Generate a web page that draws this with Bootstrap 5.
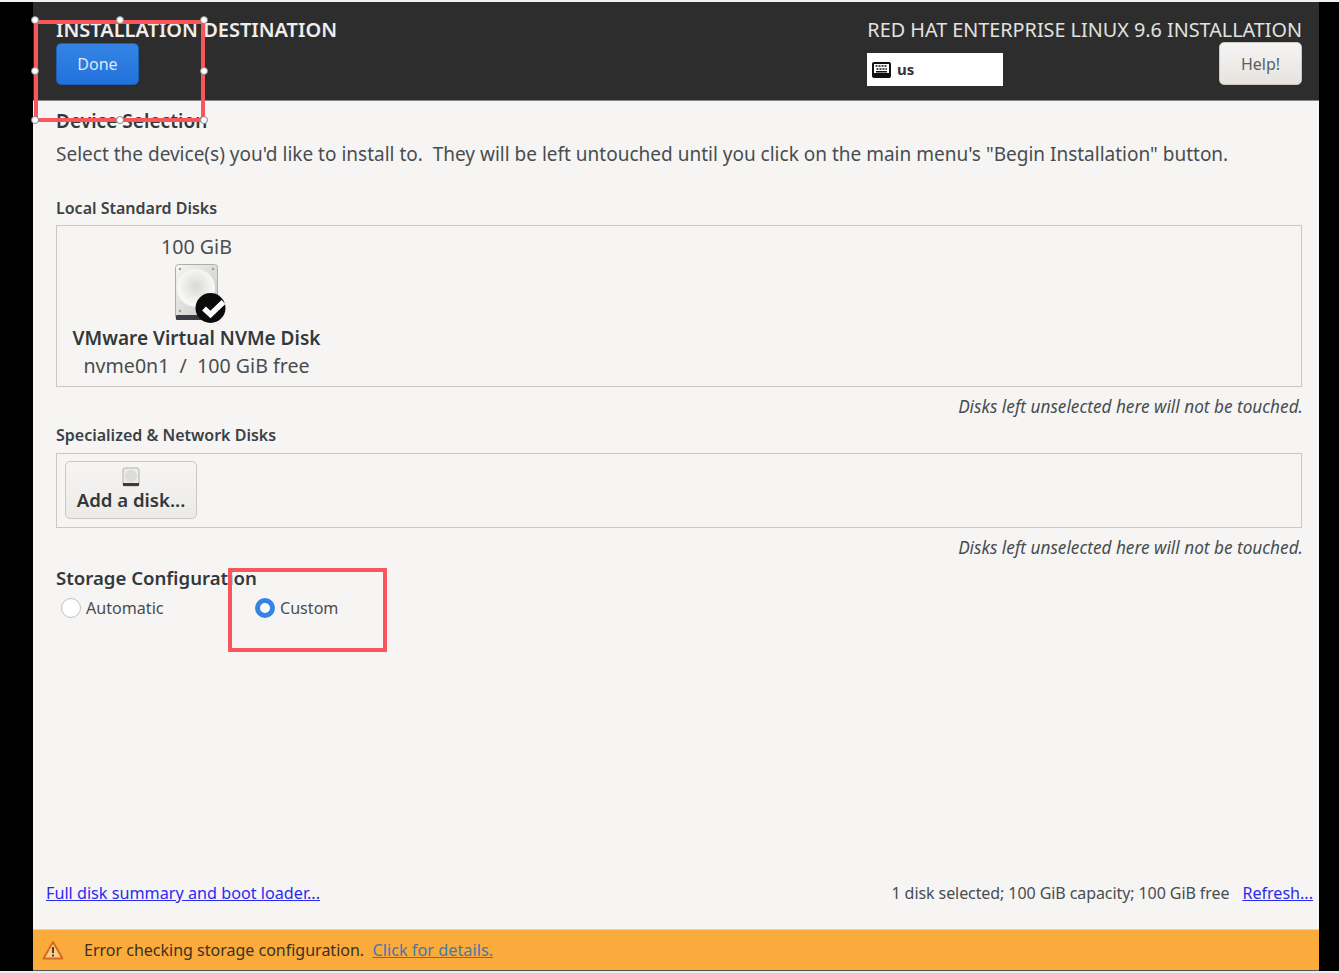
<!DOCTYPE html>
<html lang="en">
<head>
<meta charset="utf-8">
<title>Installation Destination</title>
<link href="https://cdn.jsdelivr.net/npm/bootstrap@5.3.0/dist/css/bootstrap.min.css" rel="stylesheet">
<style>
html,body{height:973px;overflow:hidden}
body{background:#000;font-family:"Noto Sans","Open Sans",sans-serif;color:#2e3436;position:relative}
.top-strip{height:2px;background:#f1f1f1}
.bottom-strip{height:2px;background:#ececec}
.win{width:1286px;height:969px;margin-left:33px;background:#f6f5f4}
.hdr{height:99px;background:#2d2d2d;border-bottom:1px solid #8a8a8a;padding:16px 17px 0 23px;color:#eeeeec;flex:none}
.hdr-title{font-size:20px;line-height:24px;font-weight:600;white-space:nowrap}
.hdr-product{font-size:19.8px;line-height:24px;text-align:right;white-space:nowrap;color:#e2e2e0}
.done-btn{width:83px;height:42px;margin-top:1px;background:linear-gradient(#3584e4,#2272dd);border:1px solid #1b5fb8;border-radius:5px;color:#dfe8f7;font-size:16px;padding:0}
.help-btn{width:83px;height:43px;background:linear-gradient(#f6f5f4,#e6e3df);border:1px solid #cdc7c2;border-radius:5px;color:#5a5f60;font-size:16px;padding:0}
.kbd-box{width:136px;height:33px;margin-top:11px;background:#fff;color:#333;font-weight:700;font-size:15px;padding-left:5px;gap:6px}
.hdr-right{width:435px}
.body-area{padding:8px 17px 0 23px}
.sec-head{font-size:19px;line-height:24px;font-weight:600;color:#33383a;letter-spacing:.05px}
.intro{font-size:19px;line-height:24px;margin-top:9px;color:#484d50}
.sub-head{font-size:16px;line-height:20px;font-weight:600;color:#3c4144}
.sub-head-first{margin-top:32px}
.sub-head-second{margin-top:8px}
.disk-box{border:1px solid #cdc7c2}
.disk-box-a{height:162px;margin-top:7px;padding:9px 0 0 15px}
.disk-box-b{height:75px;margin-top:8px;padding:7px 8px}
.disk-tile{width:249px;text-align:center;font-size:19.6px;line-height:24px;color:#484d50}
.disk-name{font-size:19px;font-weight:600;color:#33383a}
.disk-sub{margin-top:4px}
.disk-pic{height:60px;margin:5px 0 2px}
.note{font-style:italic;font-size:17.2px;line-height:20px;text-align:right;color:#484d50;margin-top:10px;margin-right:-1px}
.add-btn{width:132px;height:58px;background:linear-gradient(#f6f5f4,#edebe8);border:1px solid #cdc7c2;border-radius:5px;font-size:18.6px;font-weight:600;line-height:22px;color:#33383a;padding:5px 0 0;gap:2px}
.radio-dot{width:20px;height:20px;border-radius:50%;background:#fff;border:1px solid #c4bfba;flex:none}
.radio-dot-on{border:5px solid #3584e4}
.radio-row{font-size:16.1px;color:#484d50;line-height:20px;margin-top:8px;padding-left:5px}
.radio-item{width:194px;gap:5px}
.storage-head{font-size:18.6px;line-height:24px;font-weight:600;margin-top:8px;color:#33383a}
.foot-row{font-size:16.2px;color:#484d50;margin:auto -17px 0 -23px;padding:0 6px 0 13px;height:48px}
.foot-row a{color:#2a2af0}
.foot-gap{gap:13px}
.foot-link{font-size:16.1px}
.foot-stat{font-size:16px;letter-spacing:-.08px}
.warn-bar{height:42px;flex:none;background:#fbab3b;border-top:1px solid #e8d0a8;border-bottom:1px solid #555;font-size:16px;color:#3a3224;padding-left:9px}
.warn-bar a{color:#4678a8;font-size:16.3px}
.warn-text{margin-left:20px;padding-top:1px}
.anno{position:absolute;border:4px solid #f9555a;border-radius:1px;pointer-events:none}
.anno-a{left:34px;top:20px;width:171px;height:102px}
.anno-b{left:228px;top:568px;width:159px;height:84px}
.handle{position:absolute;width:8px;height:8px;border-radius:50%;background:#fff;border:1px solid #888}
.hx1{left:31px}.hx2{left:116px}.hx3{left:200px}
.hy1{top:16px}.hy2{top:67px}.hy3{top:116px}
</style>
</head>
<body>
<div class="top-strip"></div>
<div class="win d-flex flex-column">
  <header class="hdr d-flex justify-content-between">
    <div>
      <div class="hdr-title">INSTALLATION DESTINATION</div>
      <button type="button" class="btn done-btn">Done</button>
    </div>
    <div class="hdr-right">
      <div class="hdr-product">RED HAT ENTERPRISE LINUX 9.6 INSTALLATION</div>
      <div class="d-flex justify-content-between align-items-start">
        <div class="kbd-box d-flex align-items-center">
          <svg width="19" height="16" viewBox="0 0 19 16" aria-hidden="true"><rect x="0" y="0" width="19" height="16" rx="2" fill="#111"/><rect x="2" y="2" width="15" height="9" fill="#fff"/><path d="M3.500 4h2M6.500 4h2M9.500 4h2M12.500 4h2M4.500 7h2M7.500 7h2M10.500 7h2M13.500 7h1.500" stroke="#111" stroke-width="1.500"/><rect x="4" y="9" width="11" height="1.500" fill="#111"/></svg>
          <span>us</span>
        </div>
        <button type="button" class="btn help-btn">Help!</button>
      </div>
    </div>
  </header>
  <main class="body-area d-flex flex-column flex-grow-1">
    <div class="sec-head">Device Selection</div>
    <div class="intro">Select the device(s) you'd like to install to.&nbsp; They will be left untouched until you click on the main menu's "Begin Installation" button.</div>
    <div class="sub-head sub-head-first">Local Standard Disks</div>
    <div class="disk-box disk-box-a">
      <div class="disk-tile">
        <div>100 GiB</div>
        <div class="disk-pic">
          <svg width="60" height="60" viewBox="0 0 60 60" aria-hidden="true">
            <defs>
              <linearGradient id="dg" x1="0" y1="0" x2="1" y2="1"><stop offset="0" stop-color="#f6f6f4"/><stop offset="1" stop-color="#c4c4c0"/></linearGradient>
              <radialGradient id="pl" cx=".5" cy=".45" r=".6"><stop offset="0" stop-color="#d8d8d4"/><stop offset=".8" stop-color="#f8f8f6"/></radialGradient>
            </defs>
            <rect x="8.500" y=".5" width="42" height="55" rx="3" fill="url(#dg)" stroke="#b0aeaa"/>
            <circle cx="29" cy="24" r="19" fill="url(#pl)"/>
            <rect x="9" y="51" width="41" height="5" rx="1" fill="#3b3b45"/>
            <circle cx="13" cy="5" r="1.200" fill="#999"/><circle cx="46" cy="5" r="1.200" fill="#999"/><circle cx="13" cy="47" r="1.200" fill="#999"/>
            <circle cx="43.500" cy="44" r="15" fill="#0b0b0b"/>
            <path d="M37 44.500l6.500 6 13-12.500" fill="none" stroke="#fff" stroke-width="5.500"/>
          </svg>
        </div>
        <div class="disk-name">VMware Virtual NVMe Disk</div>
        <div class="disk-sub">nvme0n1&nbsp; /&nbsp; 100 GiB free</div>
      </div>
    </div>
    <div class="note">Disks left unselected here will not be touched.</div>
    <div class="sub-head sub-head-second">Specialized &amp; Network Disks</div>
    <div class="disk-box disk-box-b">
      <button type="button" class="btn add-btn d-flex flex-column align-items-center">
        <svg width="18" height="20" viewBox="0 0 18 20" aria-hidden="true"><rect x="1" y="1" width="16" height="18" rx="2" fill="#ecebe8" stroke="#b5b3af"/><circle cx="9" cy="9" r="6" fill="#dcdcd8"/><rect x="1" y="16" width="16" height="3" fill="#3b3b45"/></svg>
        <span>Add a disk...</span>
      </button>
    </div>
    <div class="note">Disks left unselected here will not be touched.</div>
    <div class="storage-head">Storage Configuration</div>
    <div class="radio-row d-flex">
      <div class="radio-item d-flex align-items-center"><span class="radio-dot"></span><span>Automatic</span></div>
      <div class="radio-item d-flex align-items-center"><span class="radio-dot radio-dot-on"></span><span>Custom</span></div>
    </div>
    <div class="foot-row d-flex justify-content-between">
      <a href="#">Full disk summary and boot loader...</a>
      <div class="d-flex foot-gap"><span class="foot-stat">1 disk selected; 100 GiB capacity; 100 GiB free</span><a class="foot-link" href="#">Refresh...</a></div>
    </div>
  </main>
  <footer class="warn-bar d-flex align-items-center">
    <svg width="22" height="20" viewBox="0 0 22 20" aria-hidden="true"><path d="M11 2L20.500 18.500H1.500Z" fill="#f8cf8a" stroke="#d9691e" stroke-width="2" stroke-linejoin="round"/><path d="M11 7v6M11 14.500v2" stroke="#5c3a1c" stroke-width="2"/></svg>
    <span class="warn-text">Error checking storage configuration.&nbsp; <a href="#">Click for details.</a></span>
  </footer>
</div>
<div class="bottom-strip"></div>
<div class="anno anno-a"></div>
<div class="anno anno-b"></div>
<span class="handle hx1 hy1"></span><span class="handle hx2 hy1"></span><span class="handle hx3 hy1"></span>
<span class="handle hx1 hy2"></span><span class="handle hx3 hy2"></span>
<span class="handle hx1 hy3"></span><span class="handle hx2 hy3"></span><span class="handle hx3 hy3"></span>
</body>
</html>
